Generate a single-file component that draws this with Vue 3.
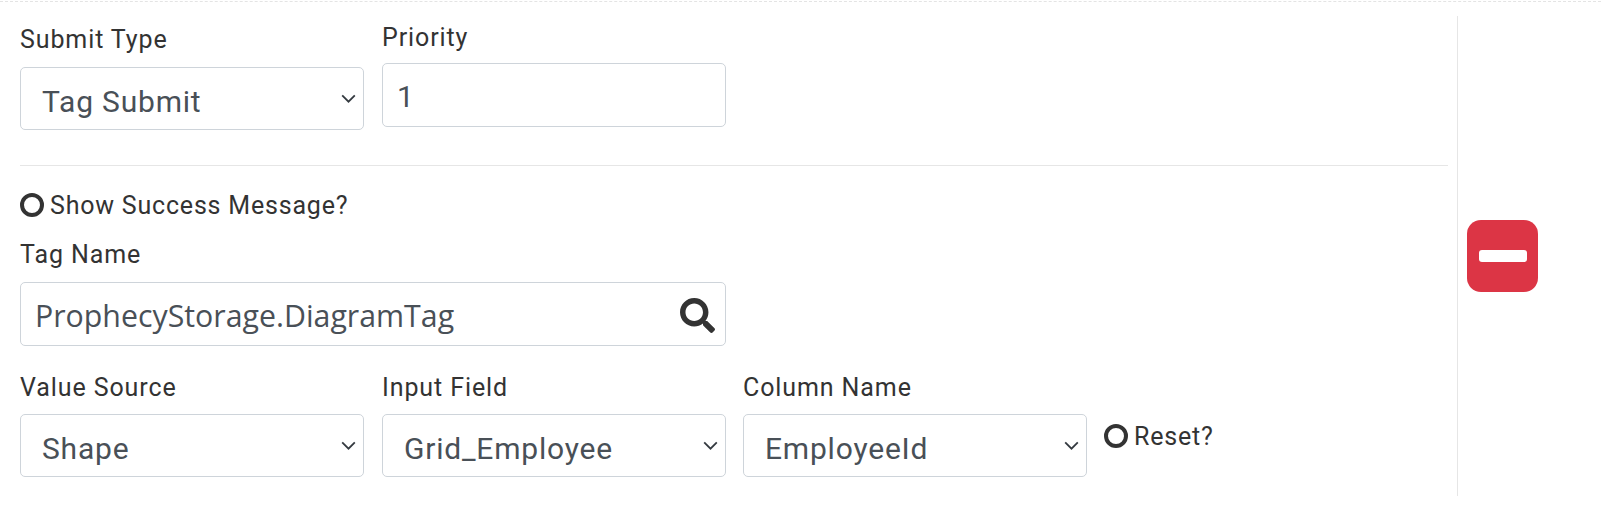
<script setup>
const topFields = [{ label: "Submit Type", value: "Tag Submit" }];
const valueFields = [
  { label: "Value Source", value: "Shape" },
  { label: "Input Field", value: "Grid_Employee" },
  { label: "Column Name", value: "EmployeeId" },
];
</script>

<template>
  <div class="page">
    <div class="main">
      <div class="form">
        <div class="row rowTop">
          <div v-for="f in topFields" :key="f.label" class="field fieldSubmit">
            <label>{{ f.label }}</label>
            <div class="selectBox">
              <select><option>{{ f.value }}</option></select>
              <svg class="chevron" viewBox="0 0 16 10"><path d="M1 1.500 8 8.500l7-7" /></svg>
            </div>
          </div>
          <div class="field">
            <label>Priority</label>
            <input class="priority" type="text" value="1" />
          </div>
        </div>

        <hr />

        <div class="check checkSuccess">
          <span class="radio"></span>
          <span>Show Success Message?</span>
        </div>

        <div class="field tagField">
          <label>Tag Name</label>
          <div class="tagBox">
            <input class="tagInput" type="text" value="ProphecyStorage.DiagramTag" />
            <svg class="search" viewBox="0 0 512 512">
              <path d="M505 442.700L405.300 343c-4.500-4.500-10.600-7-17-7H372c27.600-35.300 44-79.700 44-128C416 93.100 322.900 0 208 0S0 93.100 0 208s93.100 208 208 208c48.300 0 92.700-16.400 128-44v16.300c0 6.400 2.500 12.500 7 17l99.700 99.700c9.400 9.400 24.600 9.400 33.900 0l28.300-28.300c9.400-9.400 9.400-24.600.1-34zM208 336c-70.700 0-128-57.200-128-128 0-70.700 57.200-128 128-128 70.700 0 128 57.200 128 128 0 70.700-57.200 128-128 128z" />
            </svg>
          </div>
        </div>

        <div class="row rowValues">
          <div v-for="f in valueFields" :key="f.label" class="field">
            <label>{{ f.label }}</label>
            <div class="selectBox">
              <select><option>{{ f.value }}</option></select>
              <svg class="chevron" viewBox="0 0 16 10"><path d="M1 1.500 8 8.500l7-7" /></svg>
            </div>
          </div>
          <div class="check checkReset">
            <span class="radio"></span>
            <span>Reset?</span>
          </div>
        </div>
      </div>

      <div class="side">
        <button class="removeBtn" type="button"><span class="minus"></span></button>
      </div>
    </div>
  </div>
</template>

<style scoped>
.page {
  width: 1601px;
  height: 532px;
  box-sizing: border-box;
  border-top: 1px dashed #e4e4e4;
  margin-top: 1px;
  padding: 14px 0 0 20px;
  background: #fff;
  font-family: Roboto, "Liberation Sans", sans-serif;
  color: #333;
  overflow: hidden;
}

.main {
  display: flex;
  height: 480px;
}

.form {
  width: 1428px;
  flex-shrink: 0;
  padding-top: 6px;
  box-sizing: border-box;
}

.row {
  display: flex;
  gap: 18px;
}

.rowTop {
  height: 143px;
}

.field {
  width: 344px;
  display: flex;
  flex-direction: column;
}

.fieldSubmit {
  padding-top: 2px;
}

.fieldSubmit .selectBox {
  margin-top: 2px;
}

label {
  font-size: 25px;
  font-weight: 400;
  line-height: 32px;
  height: 41px;
  letter-spacing: 0.9px;
}

.selectBox {
  position: relative;
}

select,
input {
  display: block;
  width: 100%;
  box-sizing: border-box;
  border: 1px solid #ced4da;
  border-radius: 5px;
  background: #fff;
  color: #495057;
  font-family: Roboto, "Liberation Sans", sans-serif;
  font-size: 30px;
  outline: none;
  margin: 0;
}

select {
  appearance: none;
  height: 63px;
  padding: 6px 40px 0 21px;
  letter-spacing: 0.8px;
}

.chevron {
  position: absolute;
  right: 8px;
  top: 27px;
  width: 15px;
  height: 9px;
  fill: none;
  stroke: #343a40;
  stroke-width: 2;
}

.priority {
  height: 64px;
  padding: 2px 14px 0;
}

hr {
  border: 0;
  border-top: 1px solid #e6e6e6;
  margin: 0;
}

.check {
  display: flex;
  align-items: center;
  gap: 6px;
  font-size: 25px;
  letter-spacing: 0.8px;
}

.checkSuccess {
  margin-top: 24px;
  height: 30px;
}

.radio {
  width: 24px;
  height: 24px;
  box-sizing: border-box;
  border: 4.500px solid #333;
  border-radius: 50%;
  flex-shrink: 0;
}

.tagField {
  width: 706px;
  margin-top: 19px;
}

.tagField label {
  height: 43px;
}

.tagBox {
  position: relative;
}

.tagInput {
  height: 64px;
  padding: 2px 60px 0 14px;
  font-family: "Open Sans", "Noto Sans", sans-serif;
  font-size: 30.300px;
}

.search {
  position: absolute;
  right: 11px;
  top: 16px;
  width: 35px;
  height: 35px;
  fill: #333;
}

.rowValues {
  margin-top: 26px;
  gap: 17px;
  align-items: flex-start;
}

.rowValues label {
  height: 42px;
}

.rowValues .field:first-child {
  margin-right: 1px;
}

.checkReset {
  margin-top: 49px;
  height: 30px;
}

.side {
  border-left: 1px solid #e6e6e6;
  margin-left: 9px;
  padding: 204px 0 0 9px;
}

.removeBtn {
  width: 71px;
  height: 72px;
  border: 0;
  border-radius: 14px;
  background: #dc3545;
  display: flex;
  align-items: center;
  justify-content: center;
  padding: 0;
}

.minus {
  width: 48px;
  height: 12px;
  border-radius: 3px;
  background: #fff;
}
</style>
